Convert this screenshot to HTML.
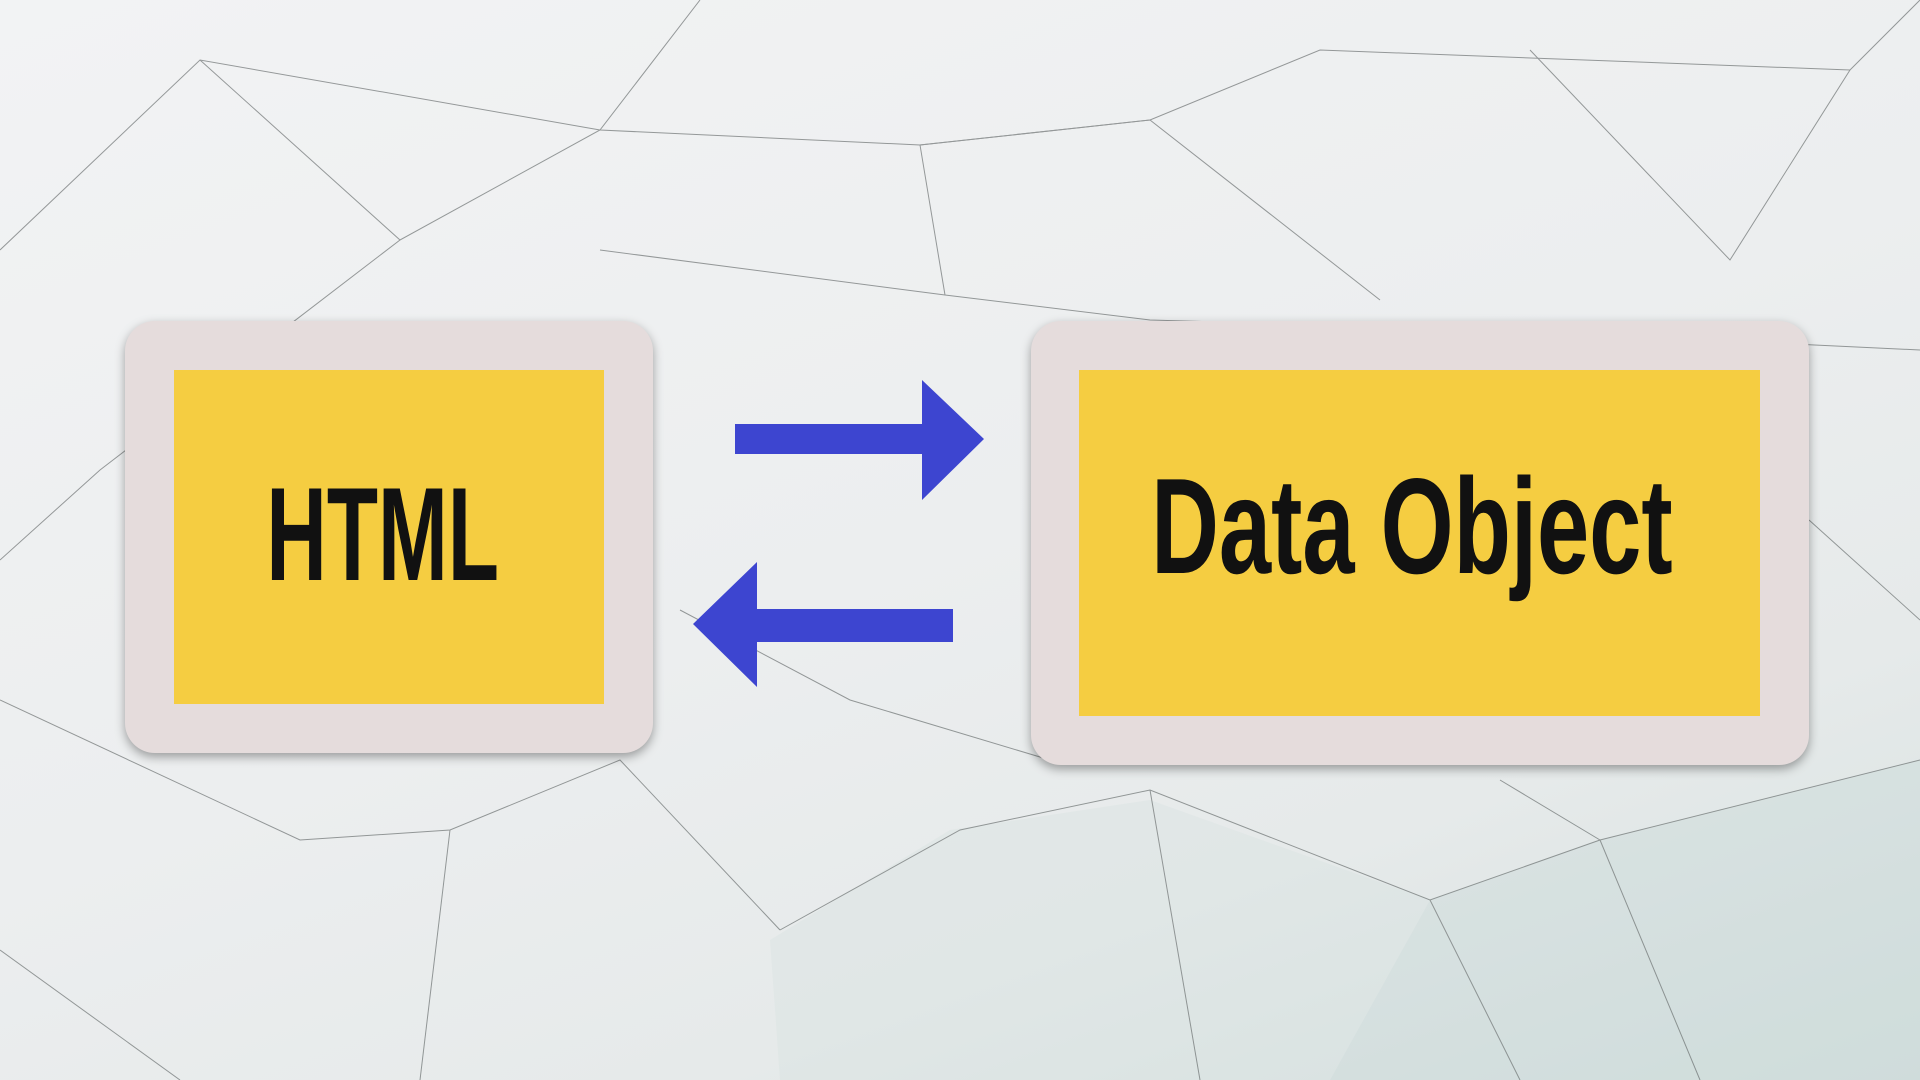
<!DOCTYPE html>
<html><head><meta charset="utf-8"><style>
html,body{margin:0;padding:0}
body{width:1920px;height:1080px;position:relative;overflow:hidden;background:linear-gradient(160deg,#f2f3f4 0%,#eceeef 50%,#e6eaea 75%,#d5e0df 100%);font-family:"Liberation Sans",sans-serif}
.bg{position:absolute;left:0;top:0}
.box{position:absolute;background:#e5dcdc;border-radius:30px;box-shadow:0 4px 10px rgba(0,0,0,.35)}
.in{position:absolute;background:#f5cd41;display:flex;align-items:center;justify-content:center}
.t{display:inline-block;font-weight:bold;color:#111;white-space:nowrap}
</style></head><body>
<svg class="bg" width="1920" height="1080" viewBox="0 0 1920 1080" fill="none" stroke="#4a5050" stroke-width="1" opacity=".55">
<polygon points="1330,1080 1430,900 1600,840 1920,760 1920,1080" fill="#c4d6d4" stroke="none" opacity=".7"/>
<polygon points="770,940 950,830 1150,800 1430,900 1330,1080 780,1080" fill="#d3dfde" stroke="none" opacity=".6"/>
<path d="M0,250 L200,60 L600,130 L920,145 L1150,120 L1320,50 L1850,70 L1920,0"/>
<path d="M200,60 L400,240 L600,130 L700,0"/>
<path d="M600,250 L945,295 L1150,320 L1500,330 L1920,350"/>
<path d="M945,295 L920,145 L1150,120 L1380,300"/>
<path d="M1530,50 L1730,260 L1850,70"/>
<path d="M0,560 L100,470 L400,240"/>
<path d="M680,610 L850,700 L1050,760"/>
<path d="M0,700 L300,840 L450,830 L620,760 L780,930"/>
<path d="M450,830 L420,1080"/>
<path d="M780,930 L960,830 L1150,790 L1430,900 L1600,840 L1920,760"/>
<path d="M1150,790 L1200,1080"/>
<path d="M1430,900 L1520,1080"/>
<path d="M1600,840 L1700,1080"/>
<path d="M0,950 L180,1080"/>
<path d="M1809,520 L1920,620"/>
<path d="M1500,780 L1600,840"/>
</svg>

<div class="box" style="left:125px;top:321px;width:528px;height:432px"></div>
<div class="in" style="left:174px;top:370px;width:430px;height:334px"><span class="t" style="font-size:133px;transform:translate(-6px,-2px) scaleX(.63)">HTML</span></div>

<div class="box" style="left:1031px;top:321px;width:778px;height:444px"></div>
<div class="in" style="left:1079px;top:370px;width:681px;height:346px"><span class="t" style="font-size:136px;transform:translate(-8px,-17px) scaleX(.69)">Data Object</span></div>

<svg class="bg" width="1920" height="1080" viewBox="0 0 1920 1080">
<polygon fill="#3d45d0" points="735,424 922,424 922,380 984,439 922,500 922,454 735,454"/>
<polygon fill="#3d45d0" points="953,609 757,609 757,562 693,624 757,687 757,642 953,642"/>
</svg>
</body></html>
